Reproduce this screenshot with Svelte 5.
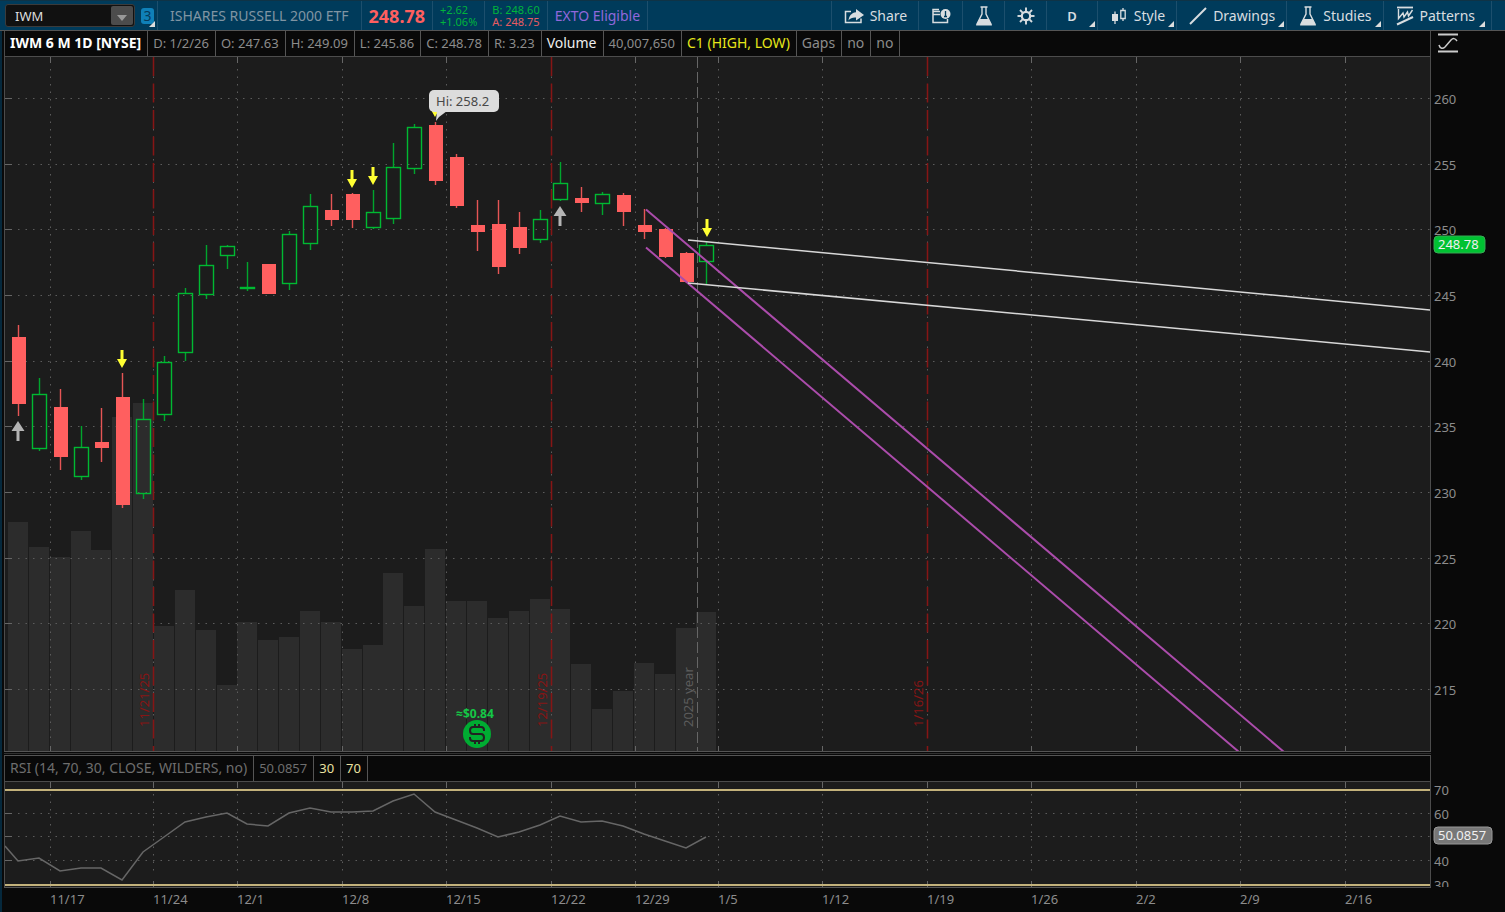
<script lang="ts">
	type Candle = {
		high: number
		top: number
		bottom: number
		low: number
		up: boolean
		volume: number
		rsi: number
	}

	const FIRST_BAR = 18
	const BAR_STEP = 20.86
	const PLOT_BOTTOM = 751

	// high, body top, body bottom, low, direction, volume top, rsi
	const rows: [number, number, number, number, number, number, number][] = [
		[325, 337, 404, 416, 0, 522, 861],
		[378, 394, 449, 451, 1, 547, 858],
		[389, 407, 457, 470, 0, 557, 871],
		[426, 447, 477, 480, 1, 531, 868],
		[408, 442, 448, 462, 0, 550, 868],
		[373, 397, 505, 508, 0, 417, 880],
		[399, 419, 494, 499, 1, 403, 852],
		[356, 362, 415, 421, 1, 626, 837],
		[288, 293, 353, 361, 1, 590, 822],
		[245, 265, 295, 299, 1, 630, 817],
		[245, 246, 256, 269, 1, 685, 813],
		[262, 287, 289, 291, 1, 622, 824],
		[264, 264, 294, 294, 0, 640, 826],
		[231, 234, 284, 290, 1, 637, 813],
		[194, 206, 244, 250, 1, 611, 808],
		[194, 210, 220, 226, 0, 622, 812],
		[193, 194, 220, 228, 0, 649, 812],
		[190, 212, 228, 229, 1, 645, 811],
		[143, 167, 219, 224, 1, 573, 801],
		[124, 127, 169, 174, 1, 606, 794],
		[122, 125, 181, 185, 0, 549, 812],
		[154, 157, 206, 208, 0, 601, 820],
		[200, 225, 232, 251, 0, 601, 828],
		[200, 224, 267, 274, 0, 618, 837],
		[212, 227, 248, 254, 0, 611, 832],
		[210, 219, 240, 243, 1, 599, 825],
		[162, 183, 200, 201, 1, 609, 816],
		[187, 198, 203, 212, 0, 664, 822],
		[192, 194, 204, 215, 1, 709, 821],
		[193, 195, 212, 226, 0, 691, 826],
		[209, 225, 232, 239, 0, 663, 834],
		[228, 229, 257, 258, 0, 674, 841],
		[252, 253, 282, 283, 0, 628, 848],
		[242, 245, 262, 284, 1, 612, 837],
	]

	const candles: Candle[] = rows.map(([high, top, bottom, low, up, volume, rsi]) => ({
		high,
		top,
		bottom,
		low,
		up: up === 1,
		volume,
		rsi,
	}))

	const barX = (index: number) => Math.round(FIRST_BAR + index * BAR_STEP)

	const dates = [
		{ label: '11/17', x: 50 },
		{ label: '11/24', x: 153 },
		{ label: '12/1', x: 237 },
		{ label: '12/8', x: 342 },
		{ label: '12/15', x: 446 },
		{ label: '12/22', x: 551 },
		{ label: '12/29', x: 635 },
		{ label: '1/5', x: 718 },
		{ label: '1/12', x: 822 },
		{ label: '1/19', x: 927 },
		{ label: '1/26', x: 1031 },
		{ label: '2/2', x: 1136 },
		{ label: '2/9', x: 1240 },
		{ label: '2/16', x: 1345 },
	]

	const prices = [260, 255, 250, 245, 240, 235, 230, 225, 220, 215]
	const priceY = (price: number) => Math.round(99 + (260 - price) * 13.13)

	const rsiLevels = [70, 60, 50, 40, 30]
	const rsiY = (level: number) => Math.round(790 + (70 - level) * 2.365)
	const rsiPoints = ['5,846', ...candles.map((candle, i) => `${barX(i)},${candle.rsi}`)].join(' ')

	const expirations = [
		{ label: '11/21/25', x: 153 },
		{ label: '12/19/25', x: 551 },
		{ label: '1/16/26', x: 927 },
	]

	const sellSignals = [
		{ x: 122, y: 368 },
		{ x: 352, y: 188 },
		{ x: 373, y: 185 },
		{ x: 435, y: 117 },
		{ x: 707, y: 237 },
	]

	const buySignals = [
		{ x: 18, y: 421 },
		{ x: 560, y: 206 },
	]

	const status = [
		{ text: 'IWM 6 M 1D [NYSE]', tone: 'label title' },
		{ text: 'D: 1/2/26', tone: '' },
		{ text: 'O: 247.63', tone: '' },
		{ text: 'H: 249.09', tone: '' },
		{ text: 'L: 245.86', tone: '' },
		{ text: 'C: 248.78', tone: '' },
		{ text: 'R: 3.23', tone: '' },
		{ text: 'Volume', tone: 'label light' },
		{ text: '40,007,650', tone: '' },
		{ text: 'C1 (HIGH, LOW)', tone: 'label yellow' },
		{ text: 'Gaps', tone: 'label' },
		{ text: 'no', tone: 'label' },
		{ text: 'no', tone: 'label' },
	]

	const rsiStatus = [
		{ text: 'RSI (14, 70, 30, CLOSE, WILDERS, no)', tone: 'label dim' },
		{ text: '50.0857', tone: 'dim' },
		{ text: '30', tone: 'cream' },
		{ text: '70', tone: 'cream' },
	]

	let symbol = $state('IWM')
</script>

{#snippet flask()}
	<svg width="18" height="20" viewBox="0 0 18 20" fill="none" stroke="currentColor">
		<path d="M5.500 1h7M7 1v7L2 18h14L11 8V1" stroke-width="1.4" />
		<path d="M4.500 13h9l3.500 6.500H1z" fill="currentColor" stroke="none" />
	</svg>
{/snippet}

<div class="app">
	<header class="toolbar">
		<div class="symbol">
			<div class="combo">
				<input aria-label="Symbol" bind:value={symbol} />
				<button type="button" aria-label="Symbol list">
					<svg width="10" height="6" viewBox="0 0 10 6"><path d="M0 0h10L5 6z" fill="#999" /></svg>
				</button>
			</div>
			<button class="link-badge" type="button">3</button>
			<span class="corner"></span>
		</div>
		<div class="cell name">ISHARES RUSSELL 2000 ETF</div>
		<div class="cell last">248.78</div>
		<div class="cell pair green"><span>+2.62</span><span>+1.06%</span></div>
		<div class="cell pair"><span class="green">B: 248.60</span><span class="ask">A: 248.75</span></div>
		<div class="cell exto">EXTO Eligible</div>

		<nav class="tools">
			<button type="button">
				<svg width="20" height="16" viewBox="0 0 20 16" fill="none" stroke="currentColor">
					<path d="M7 3.5H1.5v11H17v-4" stroke-width="1.5" />
					<path d="M12 1l8 6-8 5.500V9.500C8.500 9.300 6.500 10 4.500 12.500 5 8 7.500 4.800 12 4.300z" fill="currentColor" stroke="none" />
				</svg>
				Share
			</button>
			<button type="button" aria-label="Calendar">
				<svg width="20" height="16" viewBox="0 0 20 16" fill="none" stroke="currentColor">
					<path d="M9 3.500H2v11h14.500V11M2 6.500h7M2 3V1.500h6" stroke-width="1.5" />
					<circle cx="14.500" cy="6" r="5" fill="currentColor" stroke="none" />
					<path d="M14.500 3v5.500M13 8.500h3" stroke="#003b5b" stroke-width="1.3" />
				</svg>
			</button>
			<button type="button" aria-label="Lab">{@render flask()}</button>
			<button type="button" aria-label="Settings">
				<svg width="18" height="18" viewBox="0 0 18 18" fill="none" stroke="currentColor">
					<circle cx="9" cy="9" r="4.200" stroke-width="2.200" />
					{#each [0, 45, 90, 135, 180, 225, 270, 315] as angle (angle)}
						<path d="M9 4.500V.5" stroke-width="1.900" transform={`rotate(${angle} 9 9)`} />
					{/each}
				</svg>
			</button>
			<button class="period" type="button">D<span class="corner"></span></button>
			<button type="button">
				<svg width="18" height="18" viewBox="0 0 18 18" fill="none" stroke="currentColor">
					<path d="M5 4.500v12.500" stroke-width="1.300" />
					<path d="M2 7h6v7H2z" fill="currentColor" stroke="none" />
					<path d="M13 1v2.500M13 11.500V14M10.800 3.500h4.400v8h-4.400z" stroke-width="1.300" />
				</svg>
				Style<span class="corner"></span>
			</button>
			<button type="button">
				<svg width="18" height="18" viewBox="0 0 18 18" fill="none" stroke="currentColor">
					<path d="M1 17L17 1" stroke-width="2" />
				</svg>
				Drawings<span class="corner"></span>
			</button>
			<button type="button">{@render flask()}Studies<span class="corner"></span></button>
			<button class="patterns" type="button">
				<svg width="18" height="20" viewBox="0 0 18 20" fill="none" stroke="currentColor">
					<path d="M1 1.500h16" stroke-width="1.800" />
					<path d="M2.500 3v9.500L7 7l1 4 3.500-5 1 4L16.500 4" stroke-width="1.400" />
					<path d="M1 18.500L17 11" stroke-width="2" />
				</svg>
				Patterns<span class="corner"></span>
			</button>
		</nav>
	</header>

	<main class="workspace">
		<div class="status">
			{#each status as item, i (i)}
				<span class={item.tone}>{item.text}</span>
			{/each}
		</div>
		<div class="side">
			<button class="curve" type="button" aria-label="Chart mode">
				<svg width="20" height="20" viewBox="0 0 20 20" fill="none" stroke="currentColor">
					<path d="M0 1.500h20M0 18.500h20" stroke-width="2.200" />
					<path d="M1 12c1 4 4 4 6 2l6-7c2-2 4-2 6 1" stroke-width="1.500" />
				</svg>
			</button>
		</div>

		<div class="plot">
			<svg class="canvas" role="img" aria-label="IWM daily candles">
				<g transform="translate(-5 -57)">
					{#each candles as candle, i (i)}
						<rect class="volume" x={barX(i) - 10} y={candle.volume} width="20" height={PLOT_BOTTOM - candle.volume} />
					{/each}

					{#each prices as price (price)}
						<line class="dots" x1="18" x2="3000" y1={priceY(price) - 0.5} y2={priceY(price) - 0.5} />
						<line class="tick" x1="5" x2="12" y1={priceY(price) - 0.5} y2={priceY(price) - 0.5} />
					{/each}
					{#each dates as date (date.label)}
						<line class="dots" x1={date.x + 0.5} x2={date.x + 0.5} y1="69" y2="744" />
						<line class="tick" x1={date.x + 0.5} x2={date.x + 0.5} y1="57" y2="63" />
						<line class="tick" x1={date.x + 0.5} x2={date.x + 0.5} y1="746" y2={PLOT_BOTTOM} />
					{/each}

					{#each expirations as expiration (expiration.label)}
						<line class="expiration" x1={expiration.x + 0.5} x2={expiration.x + 0.5} y1="57" y2={PLOT_BOTTOM} />
						<text class="expiration-label" transform={`translate(${expiration.x - 4} 727) rotate(-90)`}>{expiration.label}</text>
					{/each}
					<line class="year" x1="697.5" x2="697.5" y1="57" y2={PLOT_BOTTOM} />
					<text class="year-label" transform="translate(693 727) rotate(-90)">2025 year</text>

					{#each candles as candle, i (i)}
						<g class={candle.up ? 'up' : 'down'}>
							<path class="wick" d={`M${barX(i) + 0.5} ${candle.high}V${candle.top}M${barX(i) + 0.5} ${candle.bottom}V${candle.low}`} />
							{#if candle.up}
								<rect x={barX(i) - 6.5} y={candle.top + 0.5} width="14" height={candle.bottom - candle.top - 1} />
							{:else}
								<rect x={barX(i) - 6} y={candle.top} width="14" height={candle.bottom - candle.top} />
							{/if}
						</g>
					{/each}

					<path class="channel" d="M646 209.500L1284 752M646 247.500L1239 752" />
					<path class="trend" d="M688 240L1431 310L2174 380M688 283L1431 352L2174 421" />

					{#each sellSignals as signal (signal.x)}
						<path fill="#ffff32" transform={`translate(${signal.x} ${signal.y})`} d="M-1.500-18h3v9H5L0 0-5-9h3.500z" />
					{/each}
					{#each buySignals as signal (signal.x)}
						<path fill="#b4b4b4" transform={`translate(${signal.x} ${signal.y})`} d="M0 0l6.500 10h-5v10h-3V10h-5z" />
					{/each}

					<path fill="#dcdcdc" d="M437 111h10l-8 6-3 4z" />
					<rect x="429" y="90" width="70" height="22" rx="5" fill="#dcdcdc" />
					<text class="callout" x="436" y="106">Hi: 258.2</text>

					<text class="dividend" x="475" y="718">≈$0.84</text>
					<circle cx="477" cy="734" r="14" fill="#00ac32" />
					<path class="dollar" d="M484 731v-1c0-2-1-3-3-3h-8c-4 0-4 7 0 7h8c4 0 4 7 0 7h-8c-2 0-3-1-3-3v-1M475 727v-3M479 727v-3M475 741v3M479 741v3" />
				</g>
			</svg>
		</div>
		<div class="side">
			<svg class="canvas" role="img" aria-label="Price axis">
				<g transform="translate(-1431 -57)">
					{#each prices as price (price)}
						<text x="1434" y={priceY(price) + 5}>{price}</text>
					{/each}
					<rect x="1434" y="236" width="51" height="17" rx="4" fill="#00c232" stroke="#39a855" />
					<text class="badge-text" x="1438" y="249">248.78</text>
				</g>
			</svg>
		</div>

		<div class="splitter"></div>
		<div class="side"></div>

		<div class="status">
			{#each rsiStatus as item (item.text)}
				<span class={item.tone}>{item.text}</span>
			{/each}
		</div>
		<div class="side"></div>

		<div class="plot">
			<svg class="canvas" role="img" aria-label="RSI study">
				<g transform="translate(-5 -782)">
					{#each rsiLevels.slice(1, 4) as level (level)}
						<line class="dots" x1="18" x2="3000" y1={rsiY(level) - 0.5} y2={rsiY(level) - 0.5} />
						<line class="tick" x1="5" x2="12" y1={rsiY(level) - 0.5} y2={rsiY(level) - 0.5} />
					{/each}
					{#each dates as date (date.label)}
						<line class="dots" x1={date.x + 0.5} x2={date.x + 0.5} y1="794" y2="876" />
						<line class="tick" x1={date.x + 0.5} x2={date.x + 0.5} y1="782" y2="788" />
						<line class="tick" x1={date.x + 0.5} x2={date.x + 0.5} y1="881" y2="887" />
					{/each}
					<path class="band" d="M5 790H3000M5 885H3000" />
					<polyline class="rsi" points={rsiPoints} />
				</g>
			</svg>
		</div>
		<div class="side">
			<svg class="canvas" role="img" aria-label="RSI axis">
				<g transform="translate(-1431 -782)">
					{#each rsiLevels.filter((level) => level !== 50) as level (level)}
						<text x="1434" y={rsiY(level) + 5}>{level}</text>
					{/each}
					<rect x="1434" y="827" width="58" height="17" rx="4" fill="#777" stroke="#999" />
					<text class="badge-text" x="1438" y="840">50.0857</text>
				</g>
			</svg>
		</div>

		<div class="dates">
			<svg class="canvas" role="img" aria-label="Date axis">
				<g transform="translate(-5 -888)">
					{#each dates as date (date.label)}
						<text x={date.x} y="904">{date.label}</text>
					{/each}
				</g>
			</svg>
		</div>
		<div class="side"></div>
	</main>
</div>

<style>
	:global(body) {
		background: #090909;
	}

	.app {
		display: flex;
		flex-direction: column;
		height: 100vh;
		min-height: 500px;
		box-sizing: border-box;
		overflow: hidden;
		font-family: 'Noto Sans', 'Open Sans', sans-serif;
		font-size: 13px;
		line-height: 18px;
		color: #8c8c8c;
	}

	button,
	input {
		margin: 0;
		padding: 0;
		border: 0;
		background: none;
		color: inherit;
		font: inherit;
	}

	.toolbar {
		display: flex;
		flex: none;
		height: 31px;
		box-sizing: border-box;
		border-top: 1px solid #0f3346;
		border-bottom: 1px solid #555;
		background: #003b5b;
		font-size: 14px;
		white-space: nowrap;
	}

	.symbol {
		position: relative;
		display: flex;
		align-items: center;
		gap: 6px;
		width: 158px;
		padding-left: 5px;
		box-sizing: border-box;
		border-right: 1px solid #1c4f6d;
	}

	.combo {
		display: flex;
		width: 130px;
		height: 23px;
		box-sizing: border-box;
		border: 1px solid #3b3b3b;
		border-radius: 3px;
		background: #111;
		font-size: 13px;
	}

	.combo input {
		flex: 1;
		min-width: 0;
		padding-left: 9px;
		color: #ddd;
	}

	.combo button {
		width: 22px;
		margin: 1px;
		border-radius: 2px;
		background: #4c4c4c;
		line-height: 10px;
	}

	.link-badge {
		width: 13px;
		height: 16px;
		border-radius: 3px;
		background: #0f80b8;
		color: #063a5b;
		line-height: 16px;
	}

	.corner {
		position: absolute;
		right: 2px;
		bottom: 3px;
		border: 3px solid transparent;
		border-right-color: #ddd;
		border-bottom-color: #ddd;
	}

	.cell {
		display: flex;
		align-items: center;
		padding: 0 7px;
		border-right: 1px solid #1c4f6d;
	}

	.cell.name {
		padding: 0 12px;
		color: #8095a3;
	}

	.cell.last {
		color: #ff5f5f;
		font-size: 18px;
		font-weight: 700;
	}

	.cell.pair {
		flex-direction: column;
		align-items: flex-start;
		justify-content: center;
		font-size: 11px;
		line-height: 12px;
	}

	.green {
		color: #00b43c;
	}

	.ask {
		color: #e65b62;
	}

	.cell.exto {
		color: #9168dc;
	}

	.tools {
		display: flex;
		margin-left: auto;
		padding-right: 13px;
		border-left: 1px solid #1c4f6d;
		color: #d8dde0;
	}

	.tools button {
		position: relative;
		display: flex;
		align-items: center;
		gap: 6px;
		padding: 0 11px 0 12px;
		border-right: 1px solid #1c4f6d;
	}

	.tools button.period {
		padding: 0 20px;
		font-size: 13px;
		font-weight: 600;
	}

	.tools button.patterns {
		padding-right: 16px;
	}

	.patterns .corner {
		right: 6px;
	}

	.workspace {
		display: grid;
		flex: 1;
		min-height: 0;
		grid-template-columns: minmax(0, 1fr) 74px;
		grid-template-rows: 26px minmax(0, 1fr) 5px 26px 105px 25px;
		padding-left: 2px;
		border-left: 2px solid #05283c;
	}

	.status {
		display: flex;
		box-sizing: border-box;
		border: 1px solid #4c4c4c;
		border-top: 0;
		background: #090909;
		line-height: 24px;
		white-space: nowrap;
		overflow: hidden;
	}

	.status span {
		padding: 0 6px 0 5px;
		border-right: 1px solid #555;
	}

	.status .label {
		font-size: 14px;
	}

	.status .title {
		color: #fff;
		font-weight: 700;
	}

	.status .light {
		color: #eee;
	}

	.status .yellow {
		color: #e6e619;
	}

	.status .dim {
		color: #6e6e6e;
	}

	.status .cream {
		color: #ebe1a0;
	}

	.side {
		min-width: 0;
	}

	.curve {
		display: block;
		padding: 2px 7px;
		color: #ccc;
	}

	.plot {
		border-left: 1px solid #4c4c4c;
		border-right: 1px solid #4c4c4c;
		background: #1c1c1c;
	}

	.splitter {
		border-top: 1px solid #555;
		border-bottom: 1px solid #555;
		background: #303030;
		background-clip: content-box;
		padding: 1px 0;
	}

	.dates {
		padding-left: 1px;
		border-top: 1px solid #555;
	}

	.canvas {
		display: block;
		width: 100%;
		height: 100%;
		overflow: hidden;
	}

	.canvas text {
		fill: #8c8c8c;
		font-size: 13px;
	}

	.canvas .callout {
		fill: #484848;
	}

	.canvas .badge-text {
		fill: #f0f0f0;
	}

	.dots {
		stroke: #5c5c5c;
		stroke-dasharray: 1.5 6;
	}

	.tick {
		stroke: #666;
	}

	.volume {
		fill: #2c2c2c;
	}

	.expiration {
		stroke: #861515;
		stroke-width: 1.5;
		stroke-dasharray: 19 7.5;
	}

	.canvas .expiration-label {
		fill: #861515;
	}

	.year {
		stroke: #666;
		stroke-dasharray: 11 4;
	}

	.canvas .year-label {
		fill: #5c5c5c;
	}

	.up rect {
		fill: none;
		stroke: #00b932;
		stroke-width: 1.4;
	}

	.up .wick {
		stroke: #00a52d;
		stroke-width: 1.4;
	}

	.down rect {
		fill: #ff5f5f;
	}

	.down .wick {
		stroke: #e65555;
		stroke-width: 1.4;
	}

	.channel {
		fill: none;
		stroke: #ab4cab;
		stroke-width: 2;
	}

	.trend {
		fill: none;
		stroke: #d8d8d8;
		stroke-width: 1.5;
	}

	.canvas .dividend {
		fill: #14c846;
		font-size: 12px;
		font-weight: 700;
		text-anchor: middle;
	}

	.dollar {
		fill: none;
		stroke: #222;
		stroke-width: 2;
	}

	.band {
		stroke: #c3b27b;
		stroke-width: 2;
	}

	.rsi {
		fill: none;
		stroke: #666;
		stroke-width: 1.5;
	}
</style>
